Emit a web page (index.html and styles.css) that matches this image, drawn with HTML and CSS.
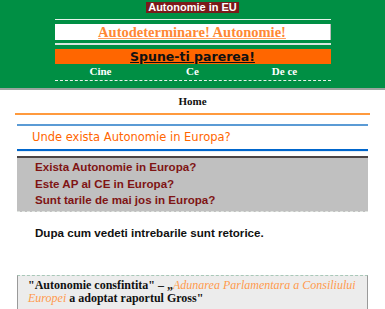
FILE: index.html
```html
<!DOCTYPE html>
<html>
<head>
<meta charset="utf-8">
<link rel="stylesheet" href="styles.css">
</head>
<body>
<header class="top">
  <div class="brand"><span class="brand-name">Autonomie in EU</span></div>
  <div class="nav">
    <div class="rule-thin"></div>
    <div class="slogan"><a href="#">Autodeterminare! Autonomie!</a></div>
    <div class="rule-double"></div>
    <div class="cta"><a href="#">Spune-ti parerea!</a></div>
    <div class="links"><a href="#">Cine</a><a href="#">Ce</a><a href="#">De ce</a></div>
    <div class="rule-dashed"></div>
  </div>
</header>
<main class="page">
  <div class="home"><a href="#">Home</a></div>
  <div class="rule-orange"></div>
  <section class="question">
    <div class="rule-blue"></div>
    <h2 class="q-title">Unde exista Autonomie in Europa?</h2>
    <div class="rule-blue2"></div>
    <div class="rule-dark"></div>
    <ul class="q-list">
      <li>Exista Autonomie in Europa?</li>
      <li>Este AP al CE in Europa?</li>
      <li>Sunt tarile de mai jos in Europa?</li>
    </ul>
    <p class="answer">Dupa cum vedeti intrebarile sunt retorice.</p>
  </section>
  <section class="quote">
    <p>"Autonomie consfintita" – „<em>Adunarea Parlamentara a Consiliului Europei</em> a adoptat raportul Gross"</p>
  </section>
</main>
</body>
</html>
```
FILE: styles.css
```css
html, body {
  margin: 0;
  padding: 0;
  background: #ffffff;
}
body {
  font-family: "Liberation Sans", Arial, sans-serif;
}
a { color: inherit; }

.top {
  background: #008f44;
  height: 88px;
  border-bottom: 2px solid #9aa59e;
  box-sizing: content-box;
}
.brand {
  display: flex;
  justify-content: center;
  padding-top: 2px;
}
.brand-name {
  background: #7a1a1a;
  color: #ffffff;
  font-weight: bold;
  font-size: 11px;
  line-height: 11px;
  height: 11px;
  padding: 0 2px;
}
.nav {
  width: 276px;
  margin: 0 auto;
}
.rule-thin {
  margin-top: 6px;
  height: 1px;
  background: #e6f2ea;
}
.slogan {
  margin-top: 4px;
  height: 16px;
  background: #ffffff;
  border-right: 1px solid #bbbbbb;
  box-sizing: border-box;
  text-align: center;
  font-family: "Liberation Serif", "Times New Roman", serif;
  font-weight: bold;
  font-size: 14.5px;
  line-height: 17px;
  color: #ff8833;
}
.slogan a {
  color: #ff8833;
  text-decoration: underline;
  text-decoration-color: #ffa060;
}
.rule-double {
  margin-top: 3px;
  height: 2px;
  background: #d9e6de;
}
.cta {
  margin-top: 4px;
  height: 15px;
  background: #ff6600;
  text-align: center;
  font-family: "DejaVu Sans", Verdana, sans-serif;
  font-weight: bold;
  font-size: 12.5px;
  line-height: 16px;
  color: #111111;
}
.cta a { color: #111111; }
.links {
  display: grid;
  grid-template-columns: 1fr 1fr 1fr;
  height: 13px;
  margin-top: 1px;
  font-family: "Liberation Serif", "Times New Roman", serif;
  font-weight: bold;
  font-size: 11px;
  line-height: 13px;
  color: #ffffff;
  text-align: center;
}
.links a {
  color: #ffffff;
  text-decoration: none;
}
.rule-dashed {
  margin-top: 2px;
  height: 0;
  border-top: 1px dashed #e9f3ec;
}

.page {
  width: 351px;
  margin: 0 auto;
}
.home {
  text-align: center;
  margin-top: 5px;
  font-family: "Liberation Serif", "Times New Roman", serif;
  font-weight: bold;
  font-size: 11px;
  line-height: 13px;
  color: #111111;
}
.home a { text-decoration: none; }
.rule-orange {
  margin: 5px -2px 0;
  height: 2px;
  background: #ff9a3d;
}
.rule-blue {
  margin-top: 9px;
  height: 2px;
  background: #5b9bd5;
}
.q-title {
  margin: 0;
  padding-left: 15px;
  height: 23px;
  font-family: "DejaVu Sans", sans-serif;
  font-weight: normal;
  font-size: 11.5px;
  line-height: 23px;
  color: #ff6600;
}
.rule-blue2 {
  height: 2px;
  background: #0066cc;
  border-bottom: 1px solid #e3eef7;
}
.rule-dark {
  margin-top: 4px;
  height: 2px;
  background: #4a4444;
}
.q-list {
  list-style: none;
  margin: 0;
  padding: 1px 0 2px 18px;
  background: #c0c0c0;
  border-bottom: 1px dashed #e0e4e0;
  font-weight: bold;
  font-size: 11.6px;
  line-height: 16.5px;
  color: #7f1414;
}
.answer {
  margin: 14px 0 0 18px;
  font-weight: bold;
  font-size: 11.6px;
  line-height: 14px;
  color: #111111;
}
.quote {
  margin-top: 35px;
  background: #ececec;
  border: 1px solid #9a9a9a;
  border-top-style: dashed;
  border-top-color: #a8c8b8;
  padding: 3px 10px 8px;
}
.quote p {
  margin: 0;
  font-family: "Liberation Serif", "Times New Roman", serif;
  font-weight: bold;
  font-size: 12px;
  line-height: 13.5px;
  color: #111111;
}
.quote em {
  font-weight: normal;
  color: #ff9a4d;
}
```
